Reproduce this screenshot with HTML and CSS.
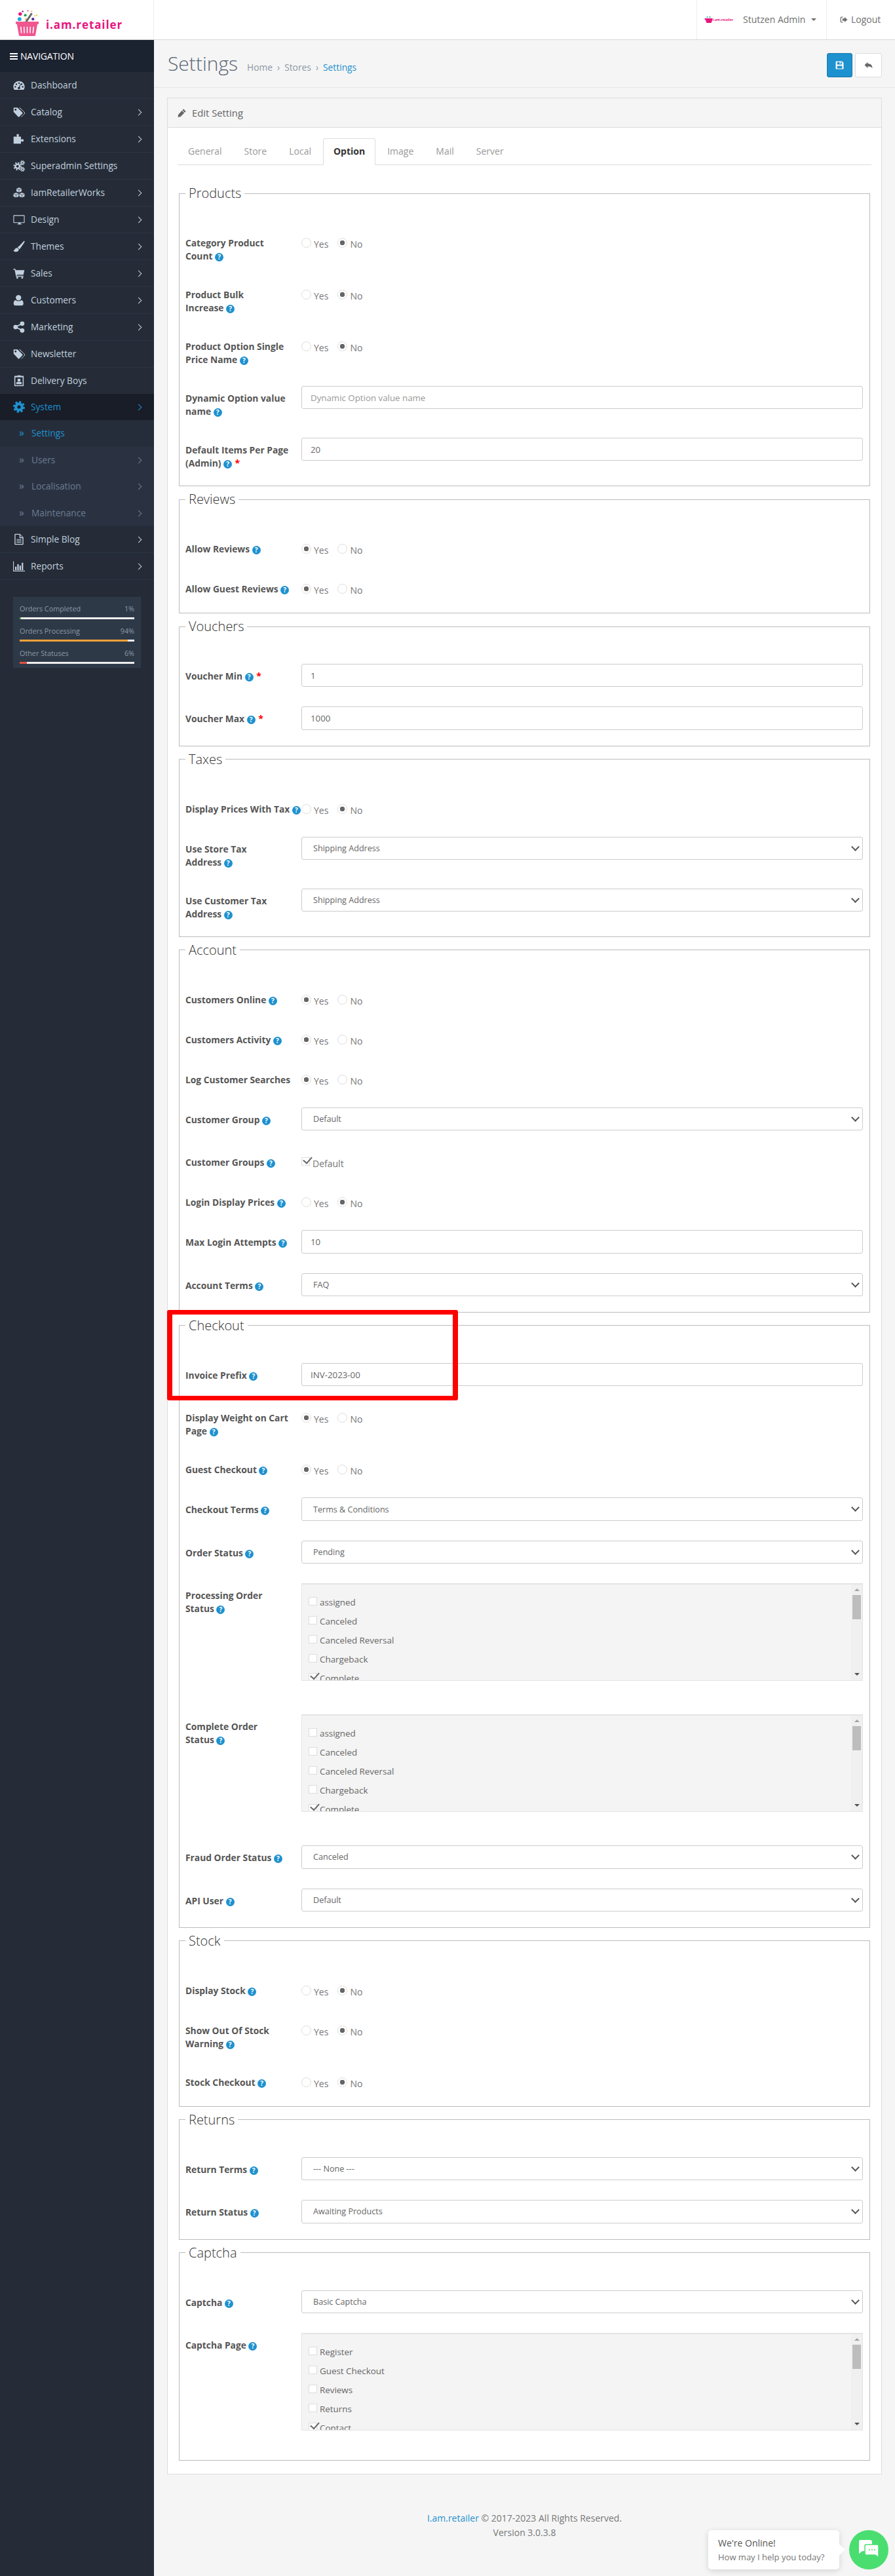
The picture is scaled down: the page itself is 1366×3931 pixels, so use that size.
FILE: index.html
```html
<!DOCTYPE html>
<html lang="en">
<head>
    <meta charset="UTF-8">
    <title>Settings</title>
    <link rel="stylesheet" href="styles.css">
</head>
<body>
<svg class="sprite" xmlns="http://www.w3.org/2000/svg">
    <symbol id="i-dashboard" viewBox="0 0 24 24"><path fill-rule="evenodd" d="M12 3.500C5.600 3.500.5 8.700.5 15c0 2.100.6 4 1.500 5.700.2.300.5.500.9.500h18.200c.4 0 .7-.2.900-.5.9-1.700 1.500-3.600 1.500-5.700 0-6.300-5.100-11.500-11.500-11.500zM12 6a1.700 1.700 0 1 1 0 3.400A1.700 1.700 0 0 1 12 6zM6.700 8.200a1.700 1.700 0 1 1 0 3.400 1.700 1.700 0 0 1 0-3.400zM4.500 13.500a1.700 1.700 0 1 1 0 3.400 1.700 1.700 0 0 1 0-3.400zM19.500 13.500a1.700 1.700 0 1 1 0 3.400 1.700 1.700 0 0 1 0-3.400zM17.300 8.200a1.700 1.700 0 1 1 0 3.400 1.700 1.700 0 0 1 0-3.400zM15 8.800l1 .4-2.400 6.600c.6.500 1 1.200 1 2 0 1.400-1.200 2.500-2.600 2.500s-2.600-1.100-2.600-2.500 1.100-2.500 2.500-2.500z"/></symbol>
    <symbol id="i-tags" viewBox="0 0 24 24"><path fill-rule="evenodd" d="M1 3h8l10 10c.6.600.6 1.500 0 2.100l-6.500 6.500c-.6.600-1.500.600-2.100 0L1 11.500zM5 5a2 2 0 1 0 0 4 2 2 0 0 0 0-4z"/><path d="M12 3h2l10 10c.6.600.6 1.500 0 2.100l-6.500 6.500c-.4.400-1 .5-1.500.3l6-6c1-1 1-2.800 0-3.800z"/></symbol>
    <symbol id="i-puzzle" viewBox="0 0 24 24"><path d="M9 2c1.800 0 3 1 3 2.300 0 1-.8 1.500-.8 2.200 0 .5.300.8 1 .8H16v5c0 .6.400 1 .9 1 .7 0 1.200-.9 2.300-.9 1.300 0 2.300 1.100 2.300 2.600s-1 2.600-2.300 2.600c-1.100 0-1.600-.9-2.300-.9-.5 0-.9.300-.9 1v4H1V7.300h5.800c.7 0 1-.3 1-.8 0-.7-.8-1.200-.8-2.200C7 3 7.600 2 9 2z"/></symbol>
    <symbol id="i-cogs" viewBox="0 0 24 24"><g fill="none" stroke="currentColor"><circle cx="9" cy="13" r="4.200" stroke-width="3.200"/><circle cx="9" cy="13" r="7" stroke-width="3" stroke-dasharray="2.700 2.800"/><circle cx="19" cy="6" r="2.200" stroke-width="2"/><circle cx="19" cy="6" r="4" stroke-width="2" stroke-dasharray="1.800 1.340"/><circle cx="19" cy="19" r="2.200" stroke-width="2"/><circle cx="19" cy="19" r="4" stroke-width="2" stroke-dasharray="1.800 1.340"/></g></symbol>
    <symbol id="i-cubes" viewBox="0 0 24 24"><path d="M12 1.500l5.300 2.100v5.700L12 11.500 6.700 9.300V3.600zM6 12l5.300 2.100v5.700L6 22 .7 19.800v-5.700zM18 12l5.300 2.100v5.700L18 22l-5.300-2.200v-5.700z"/><path fill="none" stroke="#252c38" stroke-width=".9" d="M6.700 3.800L12 6l5.300-2.200M12 6v5.500M.7 14.300L6 16.500l5.300-2.200M6 16.500V22M12.700 14.300l5.300 2.200 5.300-2.200M18 16.500V22"/></symbol>
    <symbol id="i-desktop" viewBox="0 0 24 24"><path fill-rule="evenodd" d="M2 3h20c.8 0 1.500.7 1.500 1.500v13c0 .8-.7 1.500-1.500 1.500h-7l.6 2h1.900v1h-9v-1h1.900L11 19H2c-.8 0-1.500-.7-1.500-1.500v-13C.5 3.700 1.200 3 2 3zm0 1.500v13h20v-13z"/></symbol>
    <symbol id="i-brush" viewBox="0 0 24 24"><path d="M22.500 1c.6 0 1 .4 1 1 0 .6-.4 1.500-1.200 2.900L16 14c-.7 1.200-2 3-3.100 3.500l-3.700-3.300C10 13 11.700 11.500 13 10.500l7.500-8C21.300 1.600 22 1 22.500 1zM8.500 15l3.300 3c-.2 3-2.700 5-5.800 5-2.700 0-4.500-1.300-5.500-2.500.8 0 1.800-.4 2.500-1.700C3.800 17 5 15.200 8.500 15z"/></symbol>
    <symbol id="i-cart" viewBox="0 0 24 24"><path d="M.5 3h4.200l.6 2.500h17.700l-2 9.500H7.300l.4 2H21v2H6L3.200 5H.5z"/><circle cx="8.500" cy="21" r="2"/><circle cx="18.500" cy="21" r="2"/></symbol>
    <symbol id="i-user" viewBox="0 0 24 24"><circle cx="11" cy="7" r="5.500"/><path d="M5 12c1.300 1.300 3.500 2 6 2s4.700-.7 6-2c2.700.5 4 3 4 7 0 2.500-1.500 4-3.800 4H4.800C2.500 23 1 21.500 1 19c0-4 1.300-6.500 4-7z"/></symbol>
    <symbol id="i-share" viewBox="0 0 24 24"><circle cx="18.500" cy="5" r="4.500"/><circle cx="18.500" cy="19" r="4.500"/><circle cx="5" cy="12" r="4.500"/><path fill="none" stroke="currentColor" stroke-width="2.500" d="M18.500 5L5 12l13.500 7"/></symbol>
    <symbol id="i-badge" viewBox="0 0 24 24"><path fill-rule="evenodd" d="M4 2h5V1h6v1h5c1 0 1.500.7 1.500 1.500v18c0 .8-.5 1.500-1.500 1.500H4c-1 0-1.500-.7-1.500-1.500v-18C2.500 2.700 3 2 4 2zm.5 3v16h15V5zM12 7.500a3.200 3.200 0 1 1 0 6.400 3.200 3.200 0 0 1 0-6.400zM6.500 19v-2c0-1.700 1.500-3 3-3 .7.500 1.500.8 2.500.8s1.800-.3 2.500-.8c1.500 0 3 1.300 3 3v2z"/></symbol>
    <symbol id="i-cog" viewBox="0 0 24 24"><circle cx="12" cy="12" r="6.300" fill="none" stroke="currentColor" stroke-width="5.600"/><circle cx="12" cy="12" r="10" fill="none" stroke="currentColor" stroke-width="4" stroke-dasharray="4.200 3.650"/></symbol>
    <symbol id="i-file" viewBox="0 0 24 24"><path fill-rule="evenodd" d="M4 1h10l7 7v14c0 .6-.4 1-1 1H4c-.6 0-1-.4-1-1V2c0-.6.4-1 1-1zm.8 1.800v18.400h14.400V9.500H13V2.800zm10 .6v4.300h4.300zM7 11.500h10v1.500H7zM7 14.500h10V16H7zM7 17.500h10V19H7z"/></symbol>
    <symbol id="i-chart" viewBox="0 0 24 24"><path d="M0 2h1.500v19H24v1.500H0zM4 13h3v7H4zM8.500 8h3v12h-3zM13 11h3v9h-3zM17.500 5h3v15h-3z"/></symbol>
    <symbol id="i-pencil" viewBox="0 0 24 24"><path d="M17.500 1.500l5 5c.5.500.5 1.200 0 1.700l-2.200 2.200-6.700-6.700 2.200-2.200c.5-.5 1.200-.5 1.700 0zM12.300 5L19 11.700 8 22.500 1 23.500l1-7z"/></symbol>
    <symbol id="i-save" viewBox="0 0 24 24"><path fill-rule="evenodd" d="M3 1h16l4 4v16c0 1.100-.9 2-2 2H3c-1.100 0-2-.9-2-2V3c0-1.100.9-2 2-2zm2 2v7h13V3h-3v5h-3V3zm0 11v7h14v-7z"/></symbol>
    <symbol id="i-reply" viewBox="0 0 24 24"><path d="M10 3v5c7.500 0 13 3 13 13-1.800-4-6-6-13-6v5.500L1 11.500z"/></symbol>
    <symbol id="i-logout" viewBox="0 0 24 24"><path d="M9 3v2.500H5c-1 0-1.500.6-1.500 1.500v10c0 .9.500 1.500 1.500 1.500h4V21H5c-2.500 0-4-1.600-4-4V7c0-2.400 1.500-4 4-4z"/><path d="M14 4l9 8-9 8v-4.500H7.500v-7H14z"/></symbol>
    <symbol id="i-bubbles" viewBox="0 0 32 32"><path fill="#fff" d="M3 1h15c1.600 0 3 1.400 3 3v14H6l-5 4V3c0-1.100.9-2 2-2z"/><path fill="#fff" stroke="#4ade70" stroke-width="1.500" d="M12 8h17c1.100 0 2 .9 2 2v18l-5-4H12c-1.100 0-2-.9-2-2V10c0-1.100.9-2 2-2z"/><circle cx="17" cy="16" r="1" fill="#4ade70"/><circle cx="21" cy="16" r="1" fill="#4ade70"/><circle cx="25" cy="16" r="1" fill="#4ade70"/></symbol>
</svg>

<header class="topbar">
    <a class="brand" href="#">
        <svg class="brand-basket" viewBox="0 0 38 42">
            <circle cx="8" cy="7" r="2.800" fill="#e6177f"/><circle cx="12" cy="3" r="1.300" fill="#7b2ca0"/><circle cx="16" cy="9" r="2.100" fill="#1aa34a"/><circle cx="7" cy="15" r="3" fill="#1ea7e0"/><circle cx="28" cy="15" r="2.200" fill="#5b2ca0"/><circle cx="31" cy="10" r="1.100" fill="#f5c518"/><circle cx="20" cy="2" r="1" fill="#e6177f"/><circle cx="26" cy="3" r="1" fill="#f5a623"/><circle cx="17" cy="15" r="1.300" fill="#f5a623"/><circle cx="34" cy="9" r="1" fill="#f5a623"/>
            <path d="M15 20l10-15 2.500 1.500L18 21z" fill="#666"/>
            <path d="M1 19h36v3.500l-2 .5-3 17c0 1-1 1.500-2 1.500H8c-1 0-2-.5-2-1.500L3 23l-2-.5z" fill="#f0568f"/>
            <path d="M9 27l1 10M14 27l.5 10M19 27v10M24 27l-.5 10M29 27l-1 10" stroke="#fff" stroke-width="1.600" fill="none"/>
        </svg>
        <span class="brand-name">i.am.retailer</span>
    </a>
    <div class="topbar-right">
        <div class="top-user">
            <svg class="top-logo" viewBox="0 0 12 12"><circle cx="4" cy="2" r="1" fill="#1ea7e0"/><circle cx="8" cy="2" r="1" fill="#1aa34a"/><path d="M0 4h12v2l-2 5H3L1 6H0z" fill="#e6177f"/></svg>
            <span class="top-logo-text">i.am.retailer</span>
            <span class="top-name">Stutzen Admin</span>
            <span class="caret"></span>
        </div>
        <a class="top-logout" href="#"><svg class="ico-logout"><use href="#i-logout"/></svg>Logout</a>
    </div>
</header>

<div class="layout">
    <nav class="sidebar">
        <div class="nav-title"><span class="bars"></span>NAVIGATION</div>
        <ul class="menu">
            <li class="menu-item"><svg class="ico"><use href="#i-dashboard"/></svg>Dashboard</li>
            <li class="menu-item arrow"><svg class="ico"><use href="#i-tags"/></svg>Catalog</li>
            <li class="menu-item arrow"><svg class="ico"><use href="#i-puzzle"/></svg>Extensions</li>
            <li class="menu-item"><svg class="ico"><use href="#i-cogs"/></svg>Superadmin Settings</li>
            <li class="menu-item arrow"><svg class="ico"><use href="#i-cubes"/></svg>IamRetailerWorks</li>
            <li class="menu-item arrow"><svg class="ico"><use href="#i-desktop"/></svg>Design</li>
            <li class="menu-item arrow"><svg class="ico"><use href="#i-brush"/></svg>Themes</li>
            <li class="menu-item arrow"><svg class="ico"><use href="#i-cart"/></svg>Sales</li>
            <li class="menu-item arrow"><svg class="ico"><use href="#i-user"/></svg>Customers</li>
            <li class="menu-item arrow"><svg class="ico"><use href="#i-share"/></svg>Marketing</li>
            <li class="menu-item"><svg class="ico"><use href="#i-tags"/></svg>Newsletter</li>
            <li class="menu-item"><svg class="ico"><use href="#i-badge"/></svg>Delivery Boys</li>
            <li class="menu-item arrow active"><svg class="ico"><use href="#i-cog"/></svg>System</li>
            <li class="sub-item current"><span class="chev">»</span>Settings</li>
            <li class="sub-item arrow"><span class="chev">»</span>Users</li>
            <li class="sub-item arrow"><span class="chev">»</span>Localisation</li>
            <li class="sub-item arrow"><span class="chev">»</span>Maintenance</li>
            <li class="menu-item arrow"><svg class="ico"><use href="#i-file"/></svg>Simple Blog</li>
            <li class="menu-item arrow"><svg class="ico"><use href="#i-chart"/></svg>Reports</li>
        </ul>
        <div class="stats">
            <div class="stat-row"><span>Orders Completed</span><span>1%</span></div>
            <div class="stat-bar"><div class="fill-green" style="width: 1%"></div></div>
            <div class="stat-row"><span>Orders Processing</span><span>94%</span></div>
            <div class="stat-bar"><div class="fill-orange" style="width: 94%"></div></div>
            <div class="stat-row"><span>Other Statuses</span><span>6%</span></div>
            <div class="stat-bar"><div class="fill-red" style="width: 6%"></div></div>
        </div>
    </nav>

    <main class="content">
        <div class="page-head">
            <h1>Settings</h1>
            <ul class="crumbs">
                <li>Home</li>
                <li class="sep">›</li>
                <li>Stores</li>
                <li class="sep">›</li>
                <li class="crumb-now">Settings</li>
            </ul>
            <div class="head-btns">
                <button type="button" class="btn btn-save"><svg class="btn-ico"><use href="#i-save"/></svg></button>
                <button type="button" class="btn btn-back"><svg class="btn-ico"><use href="#i-reply"/></svg></button>
            </div>
        </div>

        <section class="panel">
            <div class="panel-head"><svg class="ico-pencil"><use href="#i-pencil"/></svg>Edit Setting</div>
            <div class="panel-body">
                <ul class="tabs">
                    <li>General</li>
                    <li>Store</li>
                    <li>Local</li>
                    <li class="tab-on">Option</li>
                    <li>Image</li>
                    <li>Mail</li>
                    <li>Server</li>
                </ul>

                <fieldset>
                    <legend>Products</legend>
                    <div class="row">
                        <label class="row-label">Category Product<br>Count <span class="help">?</span></label>
                        <div class="radios"><label><input type="radio" name="r1"> Yes</label><label><input type="radio" name="r1" checked> No</label></div>
                    </div>
                    <div class="row">
                        <label class="row-label">Product Bulk<br>Increase <span class="help">?</span></label>
                        <div class="radios"><label><input type="radio" name="r2"> Yes</label><label><input type="radio" name="r2" checked> No</label></div>
                    </div>
                    <div class="row">
                        <label class="row-label">Product Option Single<br>Price Name <span class="help">?</span></label>
                        <div class="radios"><label><input type="radio" name="r3"> Yes</label><label><input type="radio" name="r3" checked> No</label></div>
                    </div>
                    <div class="row">
                        <label class="row-label">Dynamic Option value<br>name <span class="help">?</span></label>
                        <input class="field" type="text" placeholder="Dynamic Option value name">
                    </div>
                    <div class="row">
                        <label class="row-label">Default Items Per Page<br>(Admin) <span class="help">?</span> <span class="req">*</span></label>
                        <input class="field" type="text" value="20">
                    </div>
                </fieldset>

                <fieldset>
                    <legend>Reviews</legend>
                    <div class="row">
                        <label class="row-label">Allow Reviews <span class="help">?</span></label>
                        <div class="radios"><label><input type="radio" name="r4" checked> Yes</label><label><input type="radio" name="r4"> No</label></div>
                    </div>
                    <div class="row">
                        <label class="row-label">Allow Guest Reviews <span class="help">?</span></label>
                        <div class="radios"><label><input type="radio" name="r5" checked> Yes</label><label><input type="radio" name="r5"> No</label></div>
                    </div>
                </fieldset>

                <fieldset>
                    <legend>Vouchers</legend>
                    <div class="row">
                        <label class="row-label">Voucher Min <span class="help">?</span> <span class="req">*</span></label>
                        <input class="field" type="text" value="1">
                    </div>
                    <div class="row">
                        <label class="row-label">Voucher Max <span class="help">?</span> <span class="req">*</span></label>
                        <input class="field" type="text" value="1000">
                    </div>
                </fieldset>

                <fieldset>
                    <legend>Taxes</legend>
                    <div class="row">
                        <label class="row-label">Display Prices With Tax <span class="help">?</span></label>
                        <div class="radios"><label><input type="radio" name="r6"> Yes</label><label><input type="radio" name="r6" checked> No</label></div>
                    </div>
                    <div class="row">
                        <label class="row-label">Use Store Tax<br>Address <span class="help">?</span></label>
                        <div class="select"><select><option>Shipping Address</option></select></div>
                    </div>
                    <div class="row">
                        <label class="row-label">Use Customer Tax<br>Address <span class="help">?</span></label>
                        <div class="select"><select><option>Shipping Address</option></select></div>
                    </div>
                </fieldset>

                <fieldset>
                    <legend>Account</legend>
                    <div class="row">
                        <label class="row-label">Customers Online <span class="help">?</span></label>
                        <div class="radios"><label><input type="radio" name="r7" checked> Yes</label><label><input type="radio" name="r7"> No</label></div>
                    </div>
                    <div class="row">
                        <label class="row-label">Customers Activity <span class="help">?</span></label>
                        <div class="radios"><label><input type="radio" name="r8" checked> Yes</label><label><input type="radio" name="r8"> No</label></div>
                    </div>
                    <div class="row">
                        <label class="row-label">Log Customer Searches</label>
                        <div class="radios"><label><input type="radio" name="r9" checked> Yes</label><label><input type="radio" name="r9"> No</label></div>
                    </div>
                    <div class="row">
                        <label class="row-label">Customer Group <span class="help">?</span></label>
                        <div class="select"><select><option>Default</option></select></div>
                    </div>
                    <div class="row">
                        <label class="row-label">Customer Groups <span class="help">?</span></label>
                        <div class="radios"><label class="check-one"><input type="checkbox" checked> Default</label></div>
                    </div>
                    <div class="row">
                        <label class="row-label">Login Display Prices <span class="help">?</span></label>
                        <div class="radios"><label><input type="radio" name="r10"> Yes</label><label><input type="radio" name="r10" checked> No</label></div>
                    </div>
                    <div class="row">
                        <label class="row-label">Max Login Attempts <span class="help">?</span></label>
                        <input class="field" type="text" value="10">
                    </div>
                    <div class="row">
                        <label class="row-label">Account Terms <span class="help">?</span></label>
                        <div class="select"><select><option>FAQ</option></select></div>
                    </div>
                </fieldset>

                <fieldset>
                    <legend>Checkout</legend>
                    <div class="row">
                        <label class="row-label">Invoice Prefix <span class="help">?</span></label>
                        <input class="field" type="text" value="INV-2023-00">
                    </div>
                    <div class="row">
                        <label class="row-label">Display Weight on Cart<br>Page <span class="help">?</span></label>
                        <div class="radios"><label><input type="radio" name="r11" checked> Yes</label><label><input type="radio" name="r11"> No</label></div>
                    </div>
                    <div class="row">
                        <label class="row-label">Guest Checkout <span class="help">?</span></label>
                        <div class="radios"><label><input type="radio" name="r12" checked> Yes</label><label><input type="radio" name="r12"> No</label></div>
                    </div>
                    <div class="row">
                        <label class="row-label">Checkout Terms <span class="help">?</span></label>
                        <div class="select"><select><option>Terms &amp; Conditions</option></select></div>
                    </div>
                    <div class="row">
                        <label class="row-label">Order Status <span class="help">?</span></label>
                        <div class="select"><select><option>Pending</option></select></div>
                    </div>
                    <div class="row row-list">
                        <label class="row-label">Processing Order<br>Status <span class="help">?</span></label>
                        <div class="list">
                            <label><input type="checkbox"> assigned</label>
                            <label><input type="checkbox"> Canceled</label>
                            <label><input type="checkbox"> Canceled Reversal</label>
                            <label><input type="checkbox"> Chargeback</label>
                            <label><input type="checkbox" checked> Complete</label>
                            <div class="scroll"><span class="scroll-up"></span><span class="scroll-thumb"></span><span class="scroll-down"></span></div>
                        </div>
                    </div>
                    <div class="row row-list">
                        <label class="row-label">Complete Order<br>Status <span class="help">?</span></label>
                        <div class="list">
                            <label><input type="checkbox"> assigned</label>
                            <label><input type="checkbox"> Canceled</label>
                            <label><input type="checkbox"> Canceled Reversal</label>
                            <label><input type="checkbox"> Chargeback</label>
                            <label><input type="checkbox" checked> Complete</label>
                            <div class="scroll"><span class="scroll-up"></span><span class="scroll-thumb"></span><span class="scroll-down"></span></div>
                        </div>
                    </div>
                    <div class="row">
                        <label class="row-label">Fraud Order Status <span class="help">?</span></label>
                        <div class="select"><select><option>Canceled</option></select></div>
                    </div>
                    <div class="row">
                        <label class="row-label">API User <span class="help">?</span></label>
                        <div class="select"><select><option>Default</option></select></div>
                    </div>
                </fieldset>

                <fieldset>
                    <legend>Stock</legend>
                    <div class="row">
                        <label class="row-label">Display Stock <span class="help">?</span></label>
                        <div class="radios"><label><input type="radio" name="r13"> Yes</label><label><input type="radio" name="r13" checked> No</label></div>
                    </div>
                    <div class="row">
                        <label class="row-label">Show Out Of Stock<br>Warning <span class="help">?</span></label>
                        <div class="radios"><label><input type="radio" name="r14"> Yes</label><label><input type="radio" name="r14" checked> No</label></div>
                    </div>
                    <div class="row">
                        <label class="row-label">Stock Checkout <span class="help">?</span></label>
                        <div class="radios"><label><input type="radio" name="r15"> Yes</label><label><input type="radio" name="r15" checked> No</label></div>
                    </div>
                </fieldset>

                <fieldset>
                    <legend>Returns</legend>
                    <div class="row">
                        <label class="row-label">Return Terms <span class="help">?</span></label>
                        <div class="select"><select><option>--- None ---</option></select></div>
                    </div>
                    <div class="row">
                        <label class="row-label">Return Status <span class="help">?</span></label>
                        <div class="select"><select><option>Awaiting Products</option></select></div>
                    </div>
                </fieldset>

                <fieldset>
                    <legend>Captcha</legend>
                    <div class="row">
                        <label class="row-label">Captcha <span class="help">?</span></label>
                        <div class="select"><select><option>Basic Captcha</option></select></div>
                    </div>
                    <div class="row row-list">
                        <label class="row-label">Captcha Page <span class="help">?</span></label>
                        <div class="list">
                            <label><input type="checkbox"> Register</label>
                            <label><input type="checkbox"> Guest Checkout</label>
                            <label><input type="checkbox"> Reviews</label>
                            <label><input type="checkbox"> Returns</label>
                            <label><input type="checkbox" checked> Contact</label>
                            <div class="scroll"><span class="scroll-up"></span><span class="scroll-thumb"></span><span class="scroll-down"></span></div>
                        </div>
                    </div>
                </fieldset>

                <div class="red-box"></div>
            </div>
        </section>

        <footer class="foot">
            <a href="#">I.am.retailer</a> © 2017-2023 All Rights Reserved.<br>
            Version 3.0.3.8
        </footer>
    </main>
</div>

<div class="chat">
    <div class="chat-note">
        <div class="chat-title">We're Online!</div>
        <div class="chat-sub">How may I help you today?</div>
    </div>
    <div class="chat-btn"><svg class="chat-ico"><use href="#i-bubbles"/></svg></div>
</div>
</body>
</html>
```

FILE: styles.css
```css
/* base */
* {
    box-sizing: border-box;
}

html, body {
    margin: 0;
    padding: 0;
}

body {
    position: relative;
    font-family: "Open Sans", sans-serif;
    font-size: 14px;
    line-height: 20px;
    color: #666;
    background-color: #f5f5f5;
    min-height: 3931px;
    overflow: hidden;
}

ul {
    list-style: none;
    margin: 0;
    padding: 0;
}

a {
    text-decoration: none;
    color: inherit;
}

.sprite {
    display: none;
}

/* top bar */
.topbar {
    height: 61px;
    display: flex;
    justify-content: space-between;
    background-color: #fff;
    border-bottom: 1px solid #d8d8d8;
}

.brand {
    width: 235px;
    display: flex;
    align-items: center;
    padding: 14px 0 0 23px;
    border-right: 1px solid #eee;
}

.brand-basket {
    width: 37px;
    height: 42px;
    margin-top: -4px;
}

.brand-name {
    margin-left: 10px;
    margin-top: 2px;
    font-size: 17px;
    font-weight: 700;
    letter-spacing: 0.9px;
    color: #e6177f;
}

.topbar-right {
    display: flex;
}

.top-user {
    width: 199px;
    display: flex;
    align-items: center;
    padding-left: 11px;
    border-left: 1px solid #eee;
    border-right: 1px solid #eee;
}

.top-logo {
    width: 13px;
    height: 12px;
}

.top-logo-text {
    width: 34px;
    font-size: 5px;
    font-weight: 700;
    color: #e6177f;
    white-space: nowrap;
}

.top-name {
    margin-left: 12px;
    font-size: 14px;
    color: #6f6f6f;
}

.caret {
    margin-left: 9px;
    border-top: 4px solid #6f6f6f;
    border-left: 4px solid transparent;
    border-right: 4px solid transparent;
}

.top-logout {
    width: 104px;
    display: flex;
    align-items: center;
    padding-left: 20px;
    font-size: 14px;
    color: #6f6f6f;
}

.ico-logout {
    width: 12px;
    height: 12px;
    margin-right: 5px;
    fill: #6f6f6f;
}

/* sidebar */
.layout {
    display: flex;
    align-items: stretch;
    min-height: 3870px;
}

.sidebar {
    width: 235px;
    flex: none;
    background-color: #252c38;
}

.nav-title {
    height: 49px;
    display: flex;
    align-items: center;
    padding-left: 15px;
    background-color: #1b2230;
    color: #fff;
    font-size: 14px;
    letter-spacing: -0.2px;
}

.bars {
    width: 12px;
    height: 10px;
    margin-right: 4px;
    border-top: 2px solid #fff;
    border-bottom: 2px solid #fff;
    background: linear-gradient(#fff, #fff) center / 100% 2px no-repeat;
}

.menu-item, .sub-item {
    position: relative;
    height: 41px;
    display: flex;
    align-items: center;
    font-size: 13.7px;
    color: #c2d0de;
    border-bottom: 1px solid #2c3644;
}

.menu-item {
    padding-left: 47px;
}

.ico {
    position: absolute;
    left: 20px;
    top: 11px;
    width: 18px;
    height: 18px;
    fill: currentColor;
}

.arrow::after {
    content: "";
    position: absolute;
    right: 20px;
    top: 17px;
    width: 6px;
    height: 6px;
    border-top: 1.5px solid currentColor;
    border-right: 1.5px solid currentColor;
    transform: rotate(45deg);
}

.menu-item.active {
    height: 40px;
    margin-top: -1px;
    color: #1e91cf;
    background-color: #181d28;
    border-bottom: 0;
}

.sub-item {
    padding-left: 48px;
    background-color: #2a3242;
    color: #6b7c90;
    border-bottom: 0;
    height: 40.5px;
}

.sub-item.current {
    background-color: #262d3a;
    color: #1e91cf;
}

.chev {
    position: absolute;
    left: 29px;
    top: 9px;
    font-size: 16px;
}

.stats {
    margin: 26px 20px 0;
    padding: 10px 10px 9px;
    height: 108px;
    background-color: #2e3948;
    color: #8b98a6;
    font-size: 10.8px;
}

.stat-row {
    display: flex;
    justify-content: space-between;
    line-height: 16px;
}

.stat-bar {
    height: 3px;
    margin: 5px 0 10px;
    background-color: #eee;
}

.stat-bar div {
    height: 3px;
}

.fill-green {
    background-color: #4cb64c;
}

.fill-orange {
    background-color: #f5a13a;
}

.fill-red {
    background-color: #e3503e;
}

/* page head */
.content {
    flex: 1;
    min-width: 0;
}

.page-head {
    height: 73px;
    display: flex;
    align-items: center;
    padding: 0 20px 0 21px;
    border-bottom: 1px solid #e6e6e6;
}

.page-head h1 {
    margin: 0 14px 0 0;
    font-size: 30px;
    line-height: 36px;
    font-weight: 300;
    color: #5a6675;
}

.crumbs {
    display: flex;
    align-items: center;
    margin-top: 12px;
    gap: 7px;
    font-size: 13.8px;
    color: #8d98a3;
}

.crumb-now {
    color: #1e91cf;
}

.head-btns {
    margin-left: auto;
    margin-top: 4px;
    display: flex;
    gap: 4px;
}

.btn {
    height: 37px;
    display: flex;
    align-items: center;
    justify-content: center;
    padding: 0;
    border-radius: 3px;
    border: 1px solid #ddd;
}

.btn-save {
    width: 39px;
    background-color: #1e91cf;
    border-color: #1978ab;
    fill: #fff;
}

.btn-back {
    width: 41px;
    background-color: #fff;
    fill: #666;
}

.btn-ico {
    width: 13px;
    height: 13px;
}

/* panel */
.panel {
    margin: 15px 20px 0;
    border: 1px solid #ddd;
    background-color: #fff;
}

.panel-head {
    height: 45px;
    display: flex;
    align-items: center;
    padding-left: 15px;
    font-size: 14.8px;
    color: #666;
    background-color: #f5f5f5;
    border-bottom: 1px solid #ddd;
}

.ico-pencil {
    width: 13px;
    height: 13px;
    margin-right: 9px;
    fill: #666;
}

.panel-body {
    position: relative;
    padding: 16px 15px 15px;
}

.tabs {
    display: flex;
    height: 41px;
    border-bottom: 1px solid #ddd;
    margin-bottom: 28px;
    font-size: 14px;
    color: #999;
}

.tabs li {
    height: 41px;
    padding: 9px 15px;
    margin-right: 2px;
    border: 1px solid transparent;
}

.tabs .tab-on {
    font-weight: 700;
    color: #333;
    background-color: #fff;
    border-color: #ddd #ddd #fff;
    border-radius: 3px 3px 0 0;
}

/* fieldsets */
fieldset {
    margin: 0 2px 5px;
    padding: 27px 10px 9px 9px;
    border: 1px solid #bbb;
    min-width: 0;
}

legend {
    padding: 0 5px;
    height: 30px;
    font-size: 20px;
    line-height: 30px;
    font-weight: 300;
    color: #333;
}

.row {
    display: flex;
    padding: 15px 0;
}

.row-list {
    padding-bottom: 36px;
}

.row-label {
    flex: none;
    width: 177px;
    padding-top: 9px;
    font-size: 13.8px;
    font-weight: 700;
    white-space: nowrap;
    color: #555;
}

.help {
    display: inline-block;
    width: 13px;
    height: 13px;
    border-radius: 50%;
    background-color: #1e91cf;
    color: #fff;
    font-size: 10px;
    line-height: 13px;
    text-align: center;
    vertical-align: 0;
}

.req {
    margin-left: 1px;
    color: #f00;
    font-size: 14px;
}

.radios {
    min-height: 31px;
    display: flex;
    gap: 14px;
    padding-top: 11px;
    color: #777;
}

.radios label {
    display: flex;
    align-items: flex-start;
    gap: 4px;
    line-height: 19px;
}

.radios input, .list input {
    appearance: none;
    width: 15px;
    height: 15px;
    margin: 0;
    flex: none;
    background: #fff;
}

.radios input[type="radio"] {
    border: 1px solid #ddd;
    border-radius: 50%;
}

.radios input[type="radio"]:checked {
    background: radial-gradient(circle, #666 0, #666 3.5px, #fff 4px);
}

input[type="checkbox"], .radios input[type="checkbox"], .list input[type="checkbox"] {
    position: relative;
    width: 13px;
    height: 13px;
    border: 1px solid #ddd;
    overflow: visible;
}

input[type="checkbox"]:checked::after {
    content: "";
    position: absolute;
    left: 2px;
    top: -2px;
    width: 11px;
    height: 6px;
    border-left: 2px solid #666;
    border-bottom: 2px solid #666;
    transform: rotate(-48deg);
}

.field, .select select {
    width: 100%;
    height: 35.4px;
    padding: 0 13px;
    font-family: inherit;
    font-size: 13.3px;
    color: #666;
    background-color: #fff;
    border: 1px solid #ccc;
    border-radius: 3px;
    appearance: none;
}

.field::placeholder {
    color: #999;
    opacity: 1;
}

.select {
    position: relative;
    flex: 1;
}

.select select {
    padding-left: 17px;
    font-size: 12.6px;
}

.select::after {
    content: "";
    position: absolute;
    right: 7px;
    top: 11px;
    width: 7px;
    height: 7px;
    border-right: 2px solid #555;
    border-bottom: 2px solid #555;
    transform: rotate(45deg);
}

.list {
    position: relative;
    flex: 1;
    height: 149px;
    padding: 17px 0 0 10px;
    overflow: hidden;
    background-color: #f4f4f4;
    border: 1px solid #e4e4e4;
    border-top-width: 2px;
    color: #666;
    font-size: 13.4px;
}

.list label {
    display: flex;
    gap: 4px;
    align-items: flex-start;
    height: 29px;
    line-height: 20px;
}

.list input {
    margin-top: 2px;
}

.scroll {
    position: absolute;
    right: 0;
    top: 0;
    bottom: 0;
    width: 17px;
    background-color: #f0f0f0;
}

.scroll-up, .scroll-down {
    position: absolute;
    left: 5px;
    width: 0;
    border-left: 4px solid transparent;
    border-right: 4px solid transparent;
}

.scroll-up {
    top: 6px;
    border-bottom: 4px solid #a3a3a3;
}

.scroll-down {
    bottom: 7px;
    border-top: 4px solid #505050;
}

.scroll-thumb {
    position: absolute;
    left: 2px;
    top: 16px;
    width: 13px;
    height: 37px;
    background-color: #bdbdbd;
}

/* annotation drawn over the checkout block */
.red-box {
    position: absolute;
    left: -1px;
    top: 1804px;
    width: 444px;
    height: 138px;
    border: 7px solid #f00;
    border-left-width: 8px;
    border-right-width: 8px;
    border-radius: 3px;
}

/* footer */
.foot {
    margin-top: 56px;
    text-align: center;
    color: #777;
    font-size: 14px;
    line-height: 22px;
}

.foot a {
    color: #1e91cf;
}

/* chat */
.chat {
    position: absolute;
    right: 10px;
    bottom: 10px;
    display: flex;
    align-items: center;
}

.chat-note {
    position: relative;
    width: 200px;
    height: 60px;
    padding: 9px 15px;
    margin-right: 15px;
    background-color: #fff;
    border-radius: 5px;
    box-shadow: 0 2px 10px rgba(0, 0, 0, 0.15);
}

.chat-note::after {
    content: "";
    position: absolute;
    right: -6px;
    top: 24px;
    width: 12px;
    height: 12px;
    background-color: #fff;
    transform: rotate(45deg);
}

.chat-title {
    font-size: 14px;
    line-height: 22px;
    color: #555;
}

.chat-sub {
    font-size: 13px;
    line-height: 20px;
    color: #777;
}

.chat-btn {
    width: 60px;
    height: 60px;
    display: flex;
    align-items: center;
    justify-content: center;
    background-color: #4ade70;
    border-radius: 50%;
}

.chat-ico {
    width: 32px;
    height: 32px;
}
```
